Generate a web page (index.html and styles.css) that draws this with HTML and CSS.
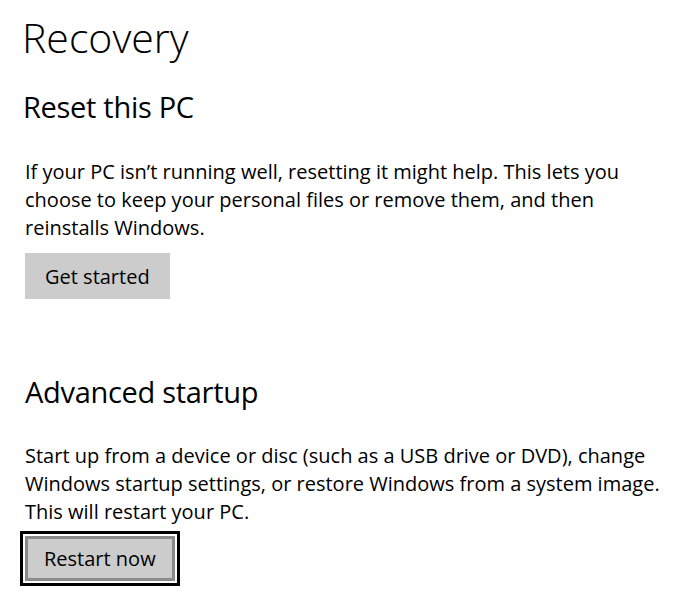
FILE: index.html
```html
<!DOCTYPE html>
<html>
<head>
<meta charset="utf-8">
<link rel="stylesheet" href="styles.css">
</head>
<body>
<div class="page">
  <h1 class="title">Recovery</h1>
  <section class="section first">
    <h2 class="heading">Reset this PC</h2>
    <p class="desc">If your PC isn’t running well, resetting it might help. This lets you choose to keep your personal files or remove them, and then reinstalls Windows.</p>
    <button class="btn">Get started</button>
  </section>
  <section class="section second">
    <h2 class="heading">Advanced startup</h2>
    <p class="desc">Start up from a device or disc (such as a USB drive or DVD), change Windows startup settings, or restore Windows from a system image. This will restart your PC.</p>
    <button class="btn focused">Restart now</button>
  </section>
</div>
</body>
</html>
```

FILE: styles.css
```css
html, body {
  margin: 0;
  padding: 0;
  background: #ffffff;
}
body {
  font-family: "Open Sans", "Noto Sans", sans-serif;
  color: #000;
  min-height: 598px;
}
.page {
  padding: 12px 0 12px 22px;
  width: 650px;
}
.title {
  margin: 0;
  font-weight: 300;
  font-size: 41px;
  line-height: 50px;
  letter-spacing: 0;
}
.heading {
  margin: 0;
  font-weight: 400;
  font-size: 29px;
  line-height: 40px;
  letter-spacing: -0.3px;
}
.section.first {
  margin-top: 25px;
  padding-left: 1px;
}
.section.second {
  margin-top: 73px;
  padding-left: 3px;
}
.desc {
  margin: 30px 0 0 0;
  font-size: 20px;
  line-height: 28px;
  width: 645px;
  letter-spacing: 0;
}
.first .desc {
  margin-top: 31px;
  margin-left: 2px;
}
.btn {
  display: block;
  box-sizing: border-box;
  margin: 11px 0 0 2px;
  background: #cccccc;
  border: 0;
  font-family: inherit;
  font-size: 20px;
  color: #000;
  height: 46px;
  padding: 0 20px;
  letter-spacing: 0;
}
.btn.focused {
  margin-left: 0;
  margin-top: 10px;
  height: 45px;
  border: 3px solid #8a8a8a;
  padding: 0 16px;
  box-shadow: 0 0 0 2px #ffffff, 0 0 0 5px #000000;
}
```
